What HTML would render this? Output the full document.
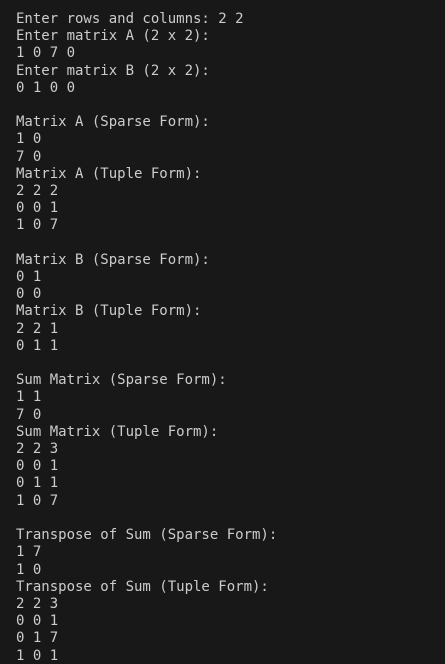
<!DOCTYPE html>
<html><head><style>
html,body{margin:0;padding:0;background:#181818;width:445px;height:664px;overflow:hidden}
pre{margin:0;padding:11px 0 0 16px;font-family:"DejaVu Sans Mono","Liberation Mono",monospace;font-size:14px;line-height:17.2px;color:#cccccc}
</style></head><body><pre>Enter rows and columns: 2 2
Enter matrix A (2 x 2):
1 0 7 0
Enter matrix B (2 x 2):
0 1 0 0

Matrix A (Sparse Form):
1 0
7 0
Matrix A (Tuple Form):
2 2 2
0 0 1
1 0 7

Matrix B (Sparse Form):
0 1
0 0
Matrix B (Tuple Form):
2 2 1
0 1 1

Sum Matrix (Sparse Form):
1 1
7 0
Sum Matrix (Tuple Form):
2 2 3
0 0 1
0 1 1
1 0 7

Transpose of Sum (Sparse Form):
1 7
1 0
Transpose of Sum (Tuple Form):
2 2 3
0 0 1
0 1 7
1 0 1</pre></body></html>
